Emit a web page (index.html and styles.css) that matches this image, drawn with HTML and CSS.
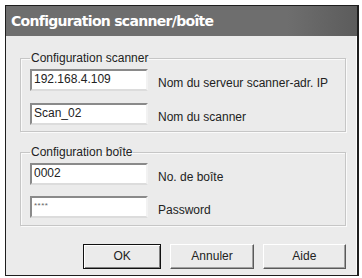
FILE: index.html
```html
<!DOCTYPE html>
<html lang="fr">
<head>
	<meta charset="UTF-8">
	<title>Configuration scanner/boîte</title>
	<link rel="stylesheet" href="styles.css">
</head>
<body>
<div class="dialog">
	<div class="titlebar">Configuration scanner/boîte</div>
	<div class="content">
		<!-- scanner -->
		<fieldset class="group">
			<legend>Configuration scanner</legend>
			<div class="row">
				<div class="field">192.168.4.109</div>
				<span class="label">Nom du serveur scanner-adr. IP</span>
			</div>
			<div class="row">
				<div class="field">Scan_02</div>
				<span class="label">Nom du scanner</span>
			</div>
		</fieldset>
		<!-- boîte -->
		<fieldset class="group group2">
			<legend>Configuration boîte</legend>
			<div class="row">
				<div class="field">0002</div>
				<span class="label">No. de boîte</span>
			</div>
			<div class="row">
				<div class="field pass">****</div>
				<span class="label">Password</span>
			</div>
		</fieldset>
		<div class="buttons">
			<a href="#" class="btn default">OK</a>
			<a href="#" class="btn">Annuler</a>
			<a href="#" class="btn">Aide</a>
		</div>
	</div>
</div>
</body>
</html>
```

FILE: styles.css
```css
body {
	margin: 0;
	background: #fff;
	font: 12px/14px "Liberation Sans", Arial, sans-serif;
	color: #222;
}

.dialog {
	margin: 5px 0 0 5px;
	width: 351px;
	height: 269px;
	border: 1px solid #1e1e1e;
	border-right-width: 2px;
	background: #ebebeb;
}

.titlebar {
	height: 30px;
	padding-left: 5px;
	background: linear-gradient(90deg, #6e6e6e 80%, #5c5c5c);
	font: bold 14px/30px "DejaVu Sans", sans-serif;
	letter-spacing: -0.7px;
	color: #fff;
}

.content {
	padding: 15px 10px 0 14px;
	border-right: 1px solid #fafafa;
	height: 223px;
}

.group {
	margin: 0;
	padding: 0 9px 6px;
	border: 1px solid #c6c6c6;
	box-shadow: inset 1px 1px 0 #fafafa, 1px 1px 0 #fafafa;
}

.group legend {
	padding: 0 1px;
	line-height: 14px;
}

.group2 {
	margin-top: 13px;
	padding-bottom: 7px;
}

.row {
	display: flex;
	align-items: center;
	margin-top: 12px;
}

.row:first-of-type {
	margin-top: 4px;
}

.group2 .row {
	margin-top: 11px;
}

.group2 .row:first-of-type {
	margin-top: 4px;
}

.field {
	width: 112px;
	height: 18px;
	padding-left: 2px;
	border: 2px solid;
	border-color: #8a8a8a #f2f2f2 #dcdcdc #8a8a8a;
	background: #fff;
	font-size: 12px;
	line-height: 16px;
}

.pass {
	font-size: 8px;
	letter-spacing: 0.5px;
	color: #666;
}

.label {
	margin: 6px 0 0 10px;
}

.buttons {
	display: flex;
	gap: 9px;
	margin: 18px 0 0 63px;
}

.btn {
	box-sizing: border-box;
	width: 85px;
	height: 25px;
	border: 1px solid;
	border-color: #fff #5a5a5a #5a5a5a #fff;
	box-shadow: inset -1px -1px 0 #a0a0a0;
	background: #ebebeb;
	color: #222;
	text-decoration: none;
	text-align: center;
	line-height: 23px;
}

.default {
	border: 1px solid #111;
	box-shadow: inset 1px 1px 0 #fff, inset -1px -1px 0 #808080;
	width: 80px;
}
```
